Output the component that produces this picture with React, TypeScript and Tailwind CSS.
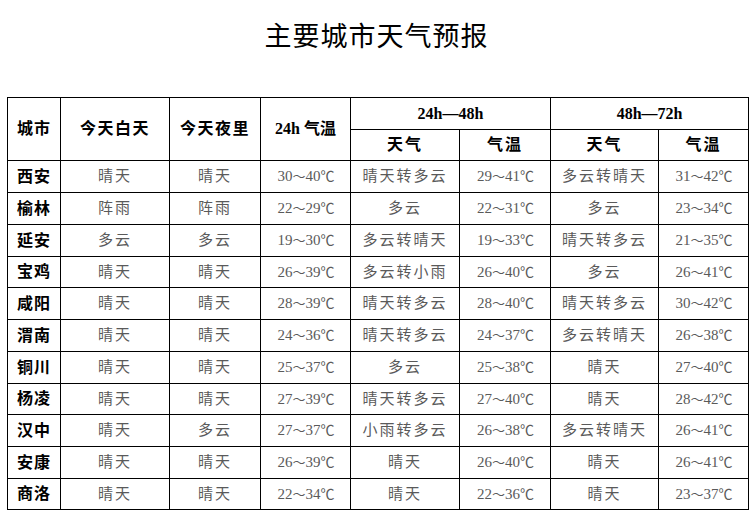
import React from "react";

const rows: [string, string, string, string, string, string, string, string][] = [
  ["西安", "晴天", "晴天", "30～40℃", "晴天转多云", "29～41℃", "多云转晴天", "31～42℃"],
  ["榆林", "阵雨", "阵雨", "22～29℃", "多云", "22～31℃", "多云", "23～34℃"],
  ["延安", "多云", "多云", "19～30℃", "多云转晴天", "19～33℃", "晴天转多云", "21～35℃"],
  ["宝鸡", "晴天", "晴天", "26～39℃", "多云转小雨", "26～40℃", "多云", "26～41℃"],
  ["咸阳", "晴天", "晴天", "28～39℃", "晴天转多云", "28～40℃", "晴天转多云", "30～42℃"],
  ["渭南", "晴天", "晴天", "24～36℃", "晴天转多云", "24～37℃", "多云转晴天", "26～38℃"],
  ["铜川", "晴天", "晴天", "25～37℃", "多云", "25～38℃", "晴天", "27～40℃"],
  ["杨凌", "晴天", "晴天", "27～39℃", "晴天转多云", "27～40℃", "晴天", "28～42℃"],
  ["汉中", "晴天", "多云", "27～37℃", "小雨转多云", "26～38℃", "多云转晴天", "26～41℃"],
  ["安康", "晴天", "晴天", "26～39℃", "晴天", "26～40℃", "晴天", "26～41℃"],
  ["商洛", "晴天", "晴天", "22～34℃", "晴天", "22～36℃", "晴天", "23～37℃"],
];

const heights = ["h-[32px]", "h-[32px]", "h-[32px]", "h-[31px]", "h-[32px]", "h-[32px]", "h-[32px]", "h-[31px]", "h-[32px]", "h-[32px]", "h-[31px]"];

const font = "font-['Liberation_Serif','Noto_Sans_CJK_SC',serif]";

function Temp({ v }: { v: string }) {
  const [a, b] = v.replace("℃", "").split("～");
  return (
    <span>
      {a}
      <span className="font-['Noto_Sans_CJK_SC',sans-serif] text-[13px]">～</span>
      {b}
      <span className="font-['Noto_Sans_CJK_SC',sans-serif] text-[14px] tracking-[-1px]">℃</span>
    </span>
  );
}

export default function App() {
  return (
    <div className="w-[753px] h-[517px] bg-white overflow-hidden">
      <div className="pt-[20px] h-[97px] text-center text-[27px] leading-[30px] text-black font-['Noto_Sans_CJK_SC',sans-serif] tracking-[1px]">
        主要城市天气预报
      </div>
      <table className={`ml-[7px] w-[741px] table-fixed border-collapse border border-black ${font}`}>
        <colgroup>
          <col className="w-[53px]" />
          <col className="w-[109px]" />
          <col className="w-[91px]" />
          <col className="w-[90px]" />
          <col className="w-[109px]" />
          <col className="w-[91px]" />
          <col className="w-[108px]" />
          <col className="w-[90px]" />
        </colgroup>
        <thead className="text-[16px] font-bold text-black">
          <tr className="h-[32px]">
            <th rowSpan={2} className="border border-black p-0 font-bold tracking-[1px]">城市</th>
            <th rowSpan={2} className="border border-black p-0 font-bold tracking-[1.5px]">今天白天</th>
            <th rowSpan={2} className="border border-black p-0 font-bold tracking-[1.5px]">今天夜里</th>
            <th rowSpan={2} className="border border-black p-0 font-bold">24h 气温</th>
            <th colSpan={2} className="border border-black p-0 font-bold">24h—48h</th>
            <th colSpan={2} className="border border-black p-0 font-bold">48h—72h</th>
          </tr>
          <tr className="h-[31px]">
            <th className="border border-black p-0 font-bold tracking-[2px]">天气</th>
            <th className="border border-black p-0 font-bold tracking-[2px]">气温</th>
            <th className="border border-black p-0 font-bold tracking-[2px]">天气</th>
            <th className="border border-black p-0 font-bold tracking-[2px]">气温</th>
          </tr>
        </thead>
        <tbody className="text-[15px] text-[#5a5a5a]">
          {rows.map((r, i) => (
            <tr key={r[0]} className={heights[i]}>
              <td className="border border-black p-0 text-center text-[16px] font-bold text-black tracking-[1px]">{r[0]}</td>
              <td className="border border-black p-0 text-center tracking-[2px]">{r[1]}</td>
              <td className="border border-black p-0 text-center tracking-[2px]">{r[2]}</td>
              <td className="border border-black p-0 text-center"><Temp v={r[3]} /></td>
              <td className="border border-black p-0 text-center tracking-[2px]">{r[4]}</td>
              <td className="border border-black p-0 text-center"><Temp v={r[5]} /></td>
              <td className="border border-black p-0 text-center tracking-[2px]">{r[6]}</td>
              <td className="border border-black p-0 text-center"><Temp v={r[7]} /></td>
            </tr>
          ))}
        </tbody>
      </table>
    </div>
  );
}
